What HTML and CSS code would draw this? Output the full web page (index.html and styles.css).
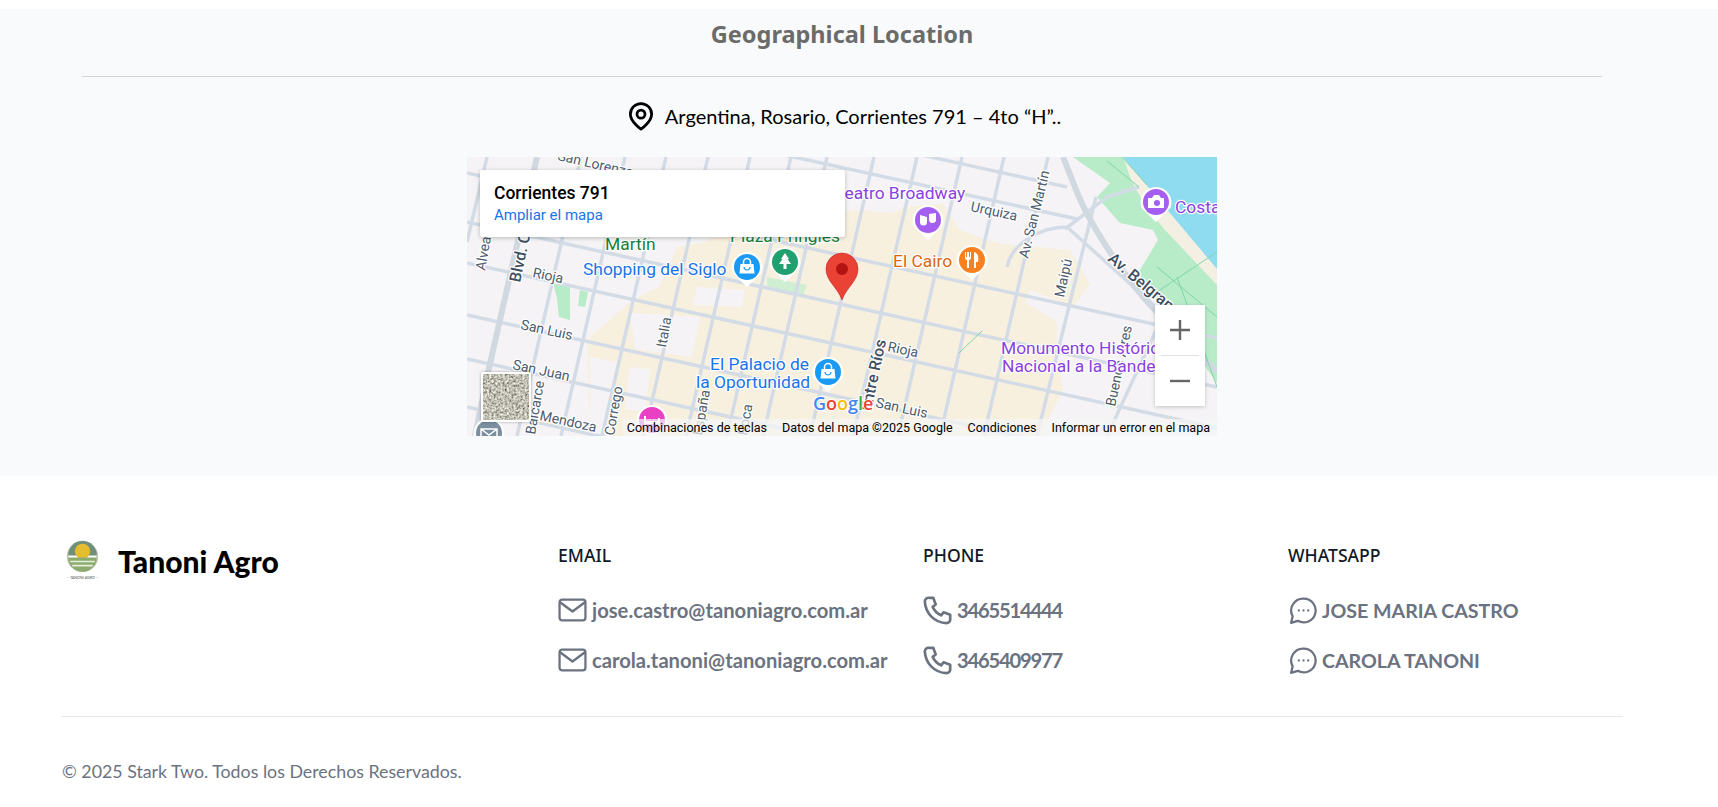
FILE: index.html
```html
<!DOCTYPE html>
<html lang="es">
<head>
<meta charset="utf-8">
<title>Tanoni Agro</title>
<link rel="stylesheet" href="styles.css">
</head>
<body>
<section class="location">
  <h2 class="location-title">Geographical Location</h2>
  <hr class="location-rule">
  <p class="address">
    <svg class="address-icon" viewBox="0 0 24 24" fill="none" stroke="currentColor" stroke-width="2.200" stroke-linecap="round" stroke-linejoin="round"><path d="M20.500 10.500c0 6-8.500 12-8.500 12s-8.500-6-8.500-12a8.500 8.500 0 0 1 17 0z"/><circle cx="12" cy="10.500" r="3.200"/></svg>
    <span>Argentina, Rosario, Corrientes 791 – 4to “H”..</span>
  </p>
  <div class="map">
    <svg class="map-art" viewBox="0 0 750 279" width="750" height="279">
      <defs>
        <g id="badge"><path d="M-14.500 6 L0 20 L14.500 6 A15.500 15.500 0 1 0 -14.500 6Z" fill="#fff"/></g>
        <g id="bag"><path d="M-6.500 -3H6.500L7.500 6.500H-7.500Z" fill="#fff"/><path d="M-3.500 -3V-5A3.500 3.500 0 0 1 3.500 -5V-3" fill="none" stroke="#fff" stroke-width="1.500"/><path d="M-3 0A3 3 0 0 0 3 0" fill="none" stroke="#1a9af5" stroke-width="1.200"/></g>
      </defs>
      <rect class="m-land" width="750" height="279"/>
      <polygon class="m-tan" points="120,183 165,143 192,130 210,90 240,85 250,55 330,60 393,53 426,56 436,50 476,47 493,73 520,83 536,87 603,93 623,127 606,150 563,133 558,145 590,165 590,200 596,233 573,279 123,279"/>
      <polygon class="m-land" points="163,156 233,160 225,200 168,192"/>
      <polygon class="m-land" points="230,130 278,133 275,150 226,148"/>
      <polygon class="m-land" points="163,210 183,212 178,255 158,252"/>
      <polygon class="m-land" points="123,200 150,205 140,279 123,279"/>
      <polygon class="m-park" points="606,0 656,0 750,110 750,226 671,116 691,83 686,73 653,66 630,40 643,26"/>
      <polygon class="m-sand" points="656,0 750,110 750,128 697,72 678,48 665,25"/>
      <polygon class="m-water" points="656,0 750,0 750,112"/>
      <polygon class="m-park" points="86,126 103,130 103,163 92,160 90,142"/>
      <polygon class="m-park" points="113,133 121,135 118,150 111,149"/>
      <polygon class="m-park-pale" points="300,120 340,128 336,138 300,132"/>
      <g class="m-road">
        <path d="M0 16L750 181M0 65L750 230M0 106L750 271M0 158L750 323M0 202L500 312M0 250L200 294M190 -30L610 62M260 -45L600 30"/>
        <path d="M114 0L50 279M158 0L94 279M199 0L135 279M241 0L177 279M283 0L219 279M324 0L260 279M360 0L296 279M407 0L343 279M450 0L386 279M495 0L431 279M537 0L473 279M581 0L517 279M629 40L570 279M700 150L640 279"/>
        <path d="M20 0L0 85"/>
        <path d="M540 110C545 85 575 70 600 70L700 160"/>
        <path d="M598 72L640 40L672 30"/>
      </g>
      <g class="m-road-major">
        <path d="M70 0L20 220L8 279"/>
        <path d="M596 0L612 40C625 70 660 125 690 155L750 215"/>
      </g>
      <g class="m-park-lines">
        <path d="M690 135L750 95M690 110L750 160M710 120L750 230M640 4L672 30M655 0L680 28M492 196L515 174"/>
      </g>

      <g class="m-label m-street">
        <text transform="translate(90 3) rotate(13)">San Lorenzo</text>
        <text transform="translate(18 114) rotate(-80)">Alvear</text>
        <text transform="translate(53 126) rotate(-78)" class="m-big">Blvd. Oroño</text>
        <text transform="translate(65 120) rotate(12)">Rioja</text>
        <text transform="translate(53 172) rotate(12)">San Luis</text>
        <text transform="translate(45 212) rotate(12)">San Juan</text>
        <text transform="translate(72 263) rotate(12)">Mendoza</text>
        <text transform="translate(68 278) rotate(-80)">Balcarce</text>
        <text transform="translate(199 191) rotate(-80)">Italia</text>
        <text transform="translate(147 279) rotate(-80)">Corrego</text>
        <text transform="translate(235 279) rotate(-80)">España</text>
        <text transform="translate(280 279) rotate(-80)">Roca</text>
        <text transform="translate(404 255) rotate(-78)" class="m-big">Entre Ríos</text>
        <text transform="translate(420 194) rotate(12)">Rioja</text>
        <text transform="translate(408 250) rotate(12)">San Luis</text>
        <text transform="translate(503 54) rotate(12)">Urquiza</text>
        <text transform="translate(561 102) rotate(-76)">Av. San Martín</text>
        <text transform="translate(597 141) rotate(-78)">Maipú</text>
        <text transform="translate(640 103) rotate(40)" class="m-big">Av. Belgrano</text>
        <text transform="translate(648 250) rotate(-78)">Buenos Aires</text>
      </g>

      <g class="m-label m-green"><text x="138" y="93">Martín</text><text x="263" y="85">Plaza Pringles</text></g>
      <g class="m-label m-blue">
        <text x="116" y="118">Shopping del Siglo</text>
        <text x="243" y="213">El Palacio de</text>
        <text x="229" y="231">la Oportunidad</text>
      </g>
      <g class="m-label m-purple">
        <text x="368" y="42">Teatro Broadway</text>
        <text x="708" y="56">Costa</text>
        <text x="534" y="197">Monumento Históric</text>
        <text x="535" y="215">Nacional a la Bandera</text>
      </g>
      <g class="m-label m-orange"><text x="426" y="110">El Cairo</text></g>

      <g transform="translate(280 110)"><use href="#badge"/><circle r="13" fill="#1a9af5"/><use href="#bag"/></g>
      <g transform="translate(318 105)"><use href="#badge"/><circle r="13" fill="#1fa06f"/><path d="M0 -9L4 -3H2.500L6 2H1.500V7H-1.500V2H-6L-2.500 -3H-4Z" fill="#fff"/></g>
      <g transform="translate(361 215)"><use href="#badge"/><circle r="13" fill="#1a9af5"/><use href="#bag"/></g>
      <g transform="translate(185 263)"><use href="#badge"/><circle r="13" fill="#ea40c4"/><path d="M-8 -4H-6V1H6V-2H8V7H6V4H-6V7H-8Z" fill="#fff"/></g>
      <g transform="translate(461 63)"><use href="#badge"/><circle r="13" fill="#a45ff0"/><path d="M-8 -5L-1 -3V2A3.500 3.500 0 0 1 -8 2ZM1 -6L8 -7V-1A3.500 3.500 0 0 1 1 0Z" fill="#fff"/></g>
      <g transform="translate(505 103)"><use href="#badge"/><circle r="13" fill="#f9801f"/><path d="M-7 -8V-2A2 2 0 0 0 -5 0V8H-3V0A2 2 0 0 0 -1 -2V-8H-2V-3H-3V-8H-5V-3H-6V-8ZM2 8V-8C6 -7 7 -3 6 2H4V8Z" fill="#fff"/></g>
      <g transform="translate(689 45)"><use href="#badge"/><circle r="13" fill="#a45ff0"/><path d="M-4 -4L-2 -7H3L5 -4H8V6H-8V-4Z" fill="#fff"/><circle cx="1" cy="1" r="3" fill="#a45ff0"/></g>
      <g transform="translate(22 276)"><use href="#badge"/><circle r="13" fill="#7b8fa1"/><path d="M-8 -4H8V6H-8ZM-8 -4L0 2L8 -4" fill="none" stroke="#fff" stroke-width="1.500"/></g>

      <text class="m-google" x="346" y="253"><tspan fill="#4285f4">G</tspan><tspan fill="#ea4335">o</tspan><tspan fill="#fbbc05">o</tspan><tspan fill="#4285f4">g</tspan><tspan fill="#34a853">l</tspan><tspan fill="#ea4335">e</tspan></text>

      <path d="M375 143C371 131 359 124 359 112A16 16 0 0 1 391 112C391 124 379 131 375 143Z" fill="#ea4335" stroke="#c5221f" stroke-width="0.600"/>
      <circle cx="375" cy="112" r="6" fill="#b31412"/>
    </svg>

    <div class="map-card">
      <div class="map-card-title">Corrientes 791</div>
      <a class="map-card-link">Ampliar el mapa</a>
    </div>

    <div class="map-zoom">
      <div class="map-zoom-btn"><svg viewBox="0 0 24 24" width="24" height="24"><path d="M2 12H22M12 2V22" fill="none" stroke="#666" stroke-width="2.400"/></svg></div>
      <div class="map-zoom-btn map-zoom-sep"><svg viewBox="0 0 24 24" width="24" height="24"><path d="M2 12H22" fill="none" stroke="#666" stroke-width="2.400"/></svg></div>
    </div>

    <div class="map-thumb">
      <svg viewBox="0 0 46 46" width="46" height="46">
        <filter id="noise"><feTurbulence type="fractalNoise" baseFrequency="0.45" numOctaves="2" seed="4"/><feColorMatrix type="matrix" values="1.300 0 0 0 -0.120  1.300 0 0 0 -0.130  1.200 0 0 0 -0.150  0 0 0 0 1"/></filter>
        <rect width="46" height="46" filter="url(#noise)"/>
      </svg>
    </div>

    <div class="map-attrib">
      <span>Combinaciones de teclas</span>
      <span>Datos del mapa ©2025 Google</span>
      <span>Condiciones</span>
      <span>Informar un error en el mapa</span>
    </div>
  </div>
</section>

<footer class="footer">
  <div class="footer-grid">
    <div class="brand">
      <svg class="brand-logo" viewBox="0 0 40 44">
        <circle cx="20" cy="18" r="14.500" fill="#fff" stroke="#b9c2b2" stroke-width="1.500"/>
        <path d="M6 17A14 14 0 0 1 34 17Z" fill="#6f8f7a"/>
        <circle cx="20" cy="13" r="7.500" fill="#e6bd2e"/>
        <path d="M6 19H34A14 14 0 0 1 6 19Z" fill="#8bab6f"/>
        <path d="M8 23H32M10 27H30" stroke="#e8efdc" stroke-width="1.500"/>
        <text class="brand-logo-text" x="20" y="40">– TANONI AGRO –</text>
      </svg>
      <span class="brand-name">Tanoni Agro</span>
    </div>

    <div class="contact">
      <h3 class="contact-title">EMAIL</h3>
      <div class="contact-item">
        <svg class="contact-icon" viewBox="0 0 28 28"><rect x="1.500" y="3.500" width="25" height="20" rx="2.500"/><path d="M2 6L14 15L26 6"/></svg>
        <span>jose.castro@tanoniagro.com.ar</span>
      </div>
      <div class="contact-item">
        <svg class="contact-icon" viewBox="0 0 28 28"><rect x="1.500" y="3.500" width="25" height="20" rx="2.500"/><path d="M2 6L14 15L26 6"/></svg>
        <span>carola.tanoni@tanoniagro.com.ar</span>
      </div>
    </div>

    <div class="contact">
      <h3 class="contact-title">PHONE</h3>
      <div class="contact-item contact-digits">
        <svg class="contact-icon" viewBox="0 0 24 24"><path d="M5 1.500H8.500L10.500 7L8 9A14 14 0 0 0 15 16L17 13.500L22.500 15.500V19.500A3 3 0 0 1 19.500 22.500C9.500 22 2 14.500 1.500 4.500A3 3 0 0 1 5 1.500Z"/></svg>
        <span>3465514444</span>
      </div>
      <div class="contact-item contact-digits">
        <svg class="contact-icon" viewBox="0 0 24 24"><path d="M5 1.500H8.500L10.500 7L8 9A14 14 0 0 0 15 16L17 13.500L22.500 15.500V19.500A3 3 0 0 1 19.500 22.500C9.500 22 2 14.500 1.500 4.500A3 3 0 0 1 5 1.500Z"/></svg>
        <span>3465409977</span>
      </div>
    </div>

    <div class="contact">
      <h3 class="contact-title">WHATSAPP</h3>
      <div class="contact-item contact-caps">
        <svg class="contact-icon" viewBox="0 0 28 28"><path d="M15 2.500A11.500 11.500 0 1 1 9.500 24L3 26L4.500 19.500A11.500 11.500 0 0 1 15 2.500Z"/><path class="dots" d="M10.500 14h.01M15 14h.01M19.500 14h.01"/></svg>
        <span>JOSE MARIA CASTRO</span>
      </div>
      <div class="contact-item contact-caps">
        <svg class="contact-icon" viewBox="0 0 28 28"><path d="M15 2.500A11.500 11.500 0 1 1 9.500 24L3 26L4.500 19.500A11.500 11.500 0 0 1 15 2.500Z"/><path class="dots" d="M10.500 14h.01M15 14h.01M19.500 14h.01"/></svg>
        <span>CAROLA TANONI</span>
      </div>
    </div>
  </div>
  <hr class="footer-rule">
  <p class="copyright">© 2025 Stark Two. Todos los Derechos Reservados.</p>
</footer>
</body>
</html>
```

FILE: styles.css
```css
* { box-sizing: border-box; }
html, body { margin: 0; padding: 0; background: #fff; }
body { padding-top: 9px; font-family: "Lato", sans-serif; }

.location {
  background: #f9fafb;
  height: 467px;
  padding: 0 116px 0 82px;
  display: flex;
  flex-direction: column;
  align-items: center;
}
.location-title {
  margin: 6px 0 0;
  font-family: "Noto Sans", sans-serif;
  font-size: 23.500px;
  line-height: 38px;
  font-weight: 700;
  color: #6b6b6b;
}
.location-rule {
  width: 100%;
  margin: 23px 0 0;
  border: 0;
  border-top: 1px solid #d1d5db;
}
.address {
  margin: 24px 0 0;
  height: 30px;
  padding-left: 3px;
  display: flex;
  align-items: center;
  gap: 9px;
  font-size: 20px;
  color: #000;
}
.address-icon { width: 30px; height: 30px; }

.map {
  position: relative;
  width: 750px;
  height: 279px;
  margin-top: 26px;
  overflow: hidden;
  font-family: "Roboto", sans-serif;
}
.map-art { display: block; }
.m-land { fill: #f5f3f5; }
.m-tan { fill: #f8f0df; }
.m-park { fill: #b8ecc9; }
.m-park-pale { fill: #cfeed2; }
.m-sand { fill: #f3efe3; }
.m-water { fill: #8fdcf0; }
.m-road path { fill: none; stroke: #d3dce6; stroke-width: 3.500; }
.m-road-major path { fill: none; stroke: #d0d8e0; stroke-width: 6; }
.m-park-lines path { fill: none; stroke: #7fd6a8; stroke-width: 1; }
.m-label text {
  font-family: "Roboto", sans-serif;
  paint-order: stroke;
  stroke: #fff;
  stroke-width: 2.500px;
  stroke-linejoin: round;
}
.m-street text { font-size: 14px; fill: #4d5b6c; }
.m-street .m-big { font-size: 16px; font-weight: 500; fill: #3f4e60; }
.m-green text { font-size: 17.400px; fill: #188038; }
.m-blue text { font-size: 17.400px; fill: #1a73e8; }
.m-purple text { font-size: 17.400px; fill: #8a3fe0; }
.m-orange text { font-size: 17.400px; fill: #d9660f; }
.m-google {
  font-family: "Open Sans", sans-serif;
  font-size: 18px;
  font-weight: 600;
  paint-order: stroke;
  stroke: #fff;
  stroke-width: 2px;
}

.map-card {
  position: absolute;
  left: 13px;
  top: 13px;
  width: 365px;
  height: 67px;
  padding: 12px 14px;
  background: #fff;
  border-radius: 2px;
  box-shadow: 0 1px 4px rgba(0, 0, 0, .25);
}
.map-card-title { font-size: 17.500px; line-height: 22px; font-weight: 500; color: #000; }
.map-card-link { display: block; margin-top: 1px; font-size: 15px; line-height: 20px; color: #1a73e8; }

.map-zoom {
  position: absolute;
  left: 688px;
  top: 148px;
  width: 50px;
  background: #fff;
  box-shadow: 0 1px 4px rgba(0, 0, 0, .2);
}
.map-zoom-btn {
  height: 50px;
  display: flex;
  align-items: center;
  justify-content: center;
}
.map-zoom-sep { position: relative; height: 51px; }
.map-zoom-sep::before {
  content: "";
  position: absolute;
  left: 6px;
  right: 6px;
  top: 0;
  border-top: 1px solid #e2e2e2;
}

.map-thumb {
  position: absolute;
  left: 14px;
  top: 215px;
  width: 50px;
  height: 50px;
  border: 2px solid #fff;
  border-radius: 2px;
  overflow: hidden;
  box-shadow: 0 0 3px rgba(0, 0, 0, .35);
}
.map-thumb svg { display: block; }

.map-attrib {
  position: absolute;
  right: 0;
  bottom: 0;
  height: 17px;
  display: flex;
  align-items: center;
  gap: 15px;
  padding: 0 7px 0 4px;
  background: rgba(245, 245, 245, .72);
  font-size: 12.500px;
  color: #000;
  white-space: nowrap;
}

.footer { padding: 0 62px; }
.footer-grid {
  display: grid;
  grid-template-columns: 496px 365px 365px 1fr;
  padding-top: 67px;
  height: 240px;
}
.brand { display: flex; align-items: flex-start; gap: 15px; height: 50px; padding-top: 3px; margin-top: -8px; }
.brand-logo { width: 41px; height: 45px; flex: none; }
.brand-logo-text { font-family: "Lato", sans-serif; font-size: 3.600px; text-anchor: middle; fill: #555; }
.brand-name {
  font-family: "Lato", sans-serif;
  font-size: 30px;
  line-height: 46px;
  font-weight: 900;
  color: #000;
}
.contact-title {
  margin: 0 0 28px;
  font-family: "Noto Sans", sans-serif;
  font-size: 17.600px;
  line-height: 24px;
  font-weight: 500;
  color: #111827;
}
.contact-item {
  height: 30px;
  margin-bottom: 20px;
  display: flex;
  align-items: center;
  gap: 5px;
  font-size: 20.200px;
  font-weight: 700;
  color: #6b7280;
  white-space: nowrap;
}
.contact-digits { letter-spacing: -1.200px; }
.contact-caps { font-size: 19.600px; }
.contact-icon {
  width: 29px;
  height: 29px;
  flex: none;
  fill: none;
  stroke: currentColor;
  stroke-width: 2.200;
  stroke-linecap: round;
  stroke-linejoin: round;
}
.contact-icon .dots { stroke-width: 2.200; }

.footer-rule {
  width: 1561px;
  margin: 0;
  border: 0;
  border-top: 1px solid #e5e7eb;
}
.copyright {
  margin: 42px 0 0;
  font-size: 17.800px;
  line-height: 24px;
  color: #6b7280;
}
```
